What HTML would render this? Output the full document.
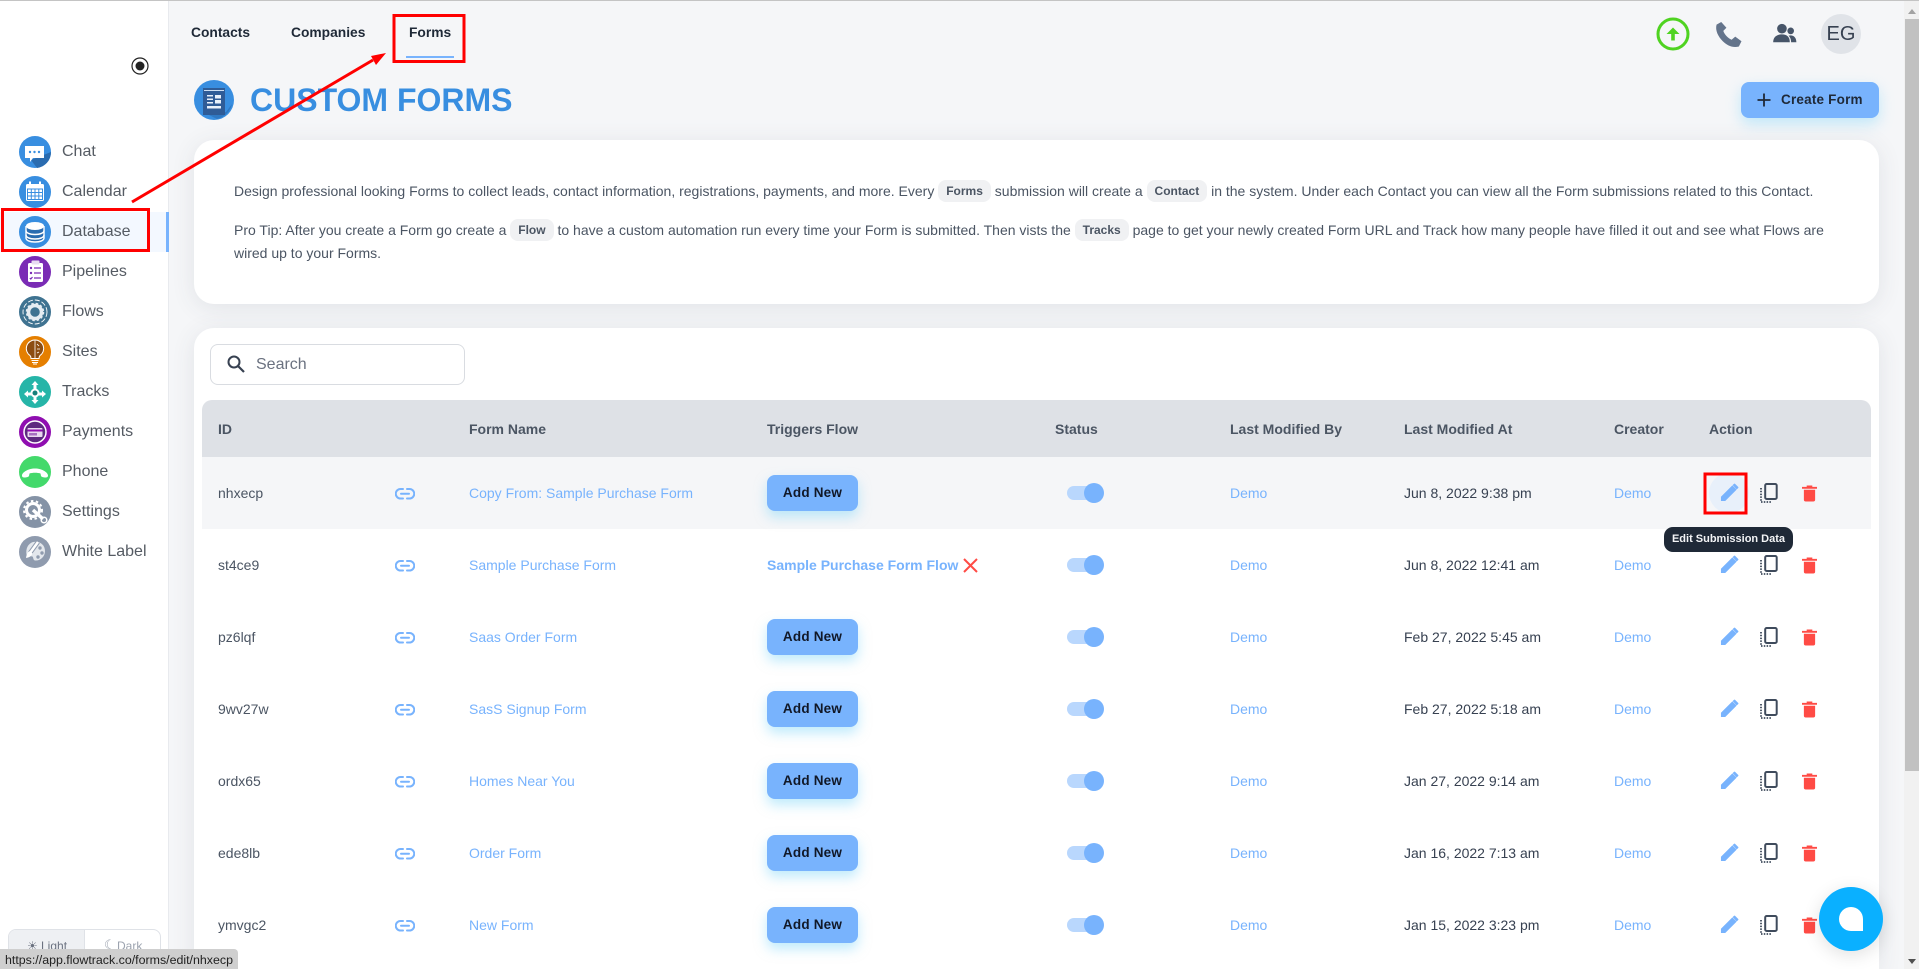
<!DOCTYPE html>
<html lang="en"><head><meta charset="utf-8"><title>Custom Forms</title>
<style>
html,body{margin:0;padding:0;width:1919px;height:969px;overflow:hidden;background:#f5f6f8;font-family:"Liberation Sans",sans-serif;color:#374151}
*{box-sizing:border-box}
#wrap{position:relative;width:1919px;height:969px;overflow:hidden;background:#f5f6f8}
.a{position:absolute}
#topline{left:0;top:0;width:1919px;height:1px;background:#c4c4c4;z-index:9}
#side{left:0;top:1px;width:169px;height:968px;background:#fff;border-right:1px solid #e8eaee}
.ni{position:absolute;left:19px;width:32px;height:32px}
.nl{position:absolute;left:62px;font-size:16px;line-height:20px;color:#555b63}
.tab{position:absolute;top:24px;font-size:13.8px;font-weight:bold;line-height:18px;color:#1f2937}
#title{left:250px;top:81px;font-size:32px;line-height:38px;font-weight:bold;color:#388ee0}
#create{left:1741px;top:82px;width:138px;height:36px;background:#78b3fd;border-radius:8px;box-shadow:0 6px 14px rgba(130,215,250,.45);font-size:13.5px;font-weight:bold;color:#1f2937;line-height:36px;padding-left:40px;letter-spacing:.2px}
.card{position:absolute;left:194px;width:1685px;background:#fff;border-radius:20px;box-shadow:0 4px 24px rgba(60,70,90,.1)}
.p{position:absolute;left:234px;font-size:14px;line-height:22px;color:#4b5563;white-space:nowrap}
.chip{display:inline-block;background:#f0f1f3;border-radius:8px;font-size:12px;font-weight:bold;line-height:23px;height:22px;padding:0 8px;margin:0;color:#4b5563;vertical-align:top}
#search{left:210px;top:344px;width:255px;height:41px;border:1px solid #d9dce1;border-radius:8px;background:#fff}
#shead{left:202px;top:400px;width:1669px;height:57px;background:#dee1e6;border-radius:10px 10px 0 0}
.th{position:absolute;top:420px;font-size:14px;font-weight:bold;line-height:18px;color:#4b5563}
.row{position:absolute;left:202px;width:1669px;height:72px}
.c{position:absolute;top:26px;font-size:14px;line-height:20px;white-space:nowrap}
.id{left:16px;color:#4b5563}.lk{color:#78b3fd}
.name{left:267px}.who{left:1028px}.when{left:1202px;color:#374151}.crt{left:1412px}
.btn{position:absolute;left:565px;top:18px;width:91px;height:36px;background:#78b3fd;border-radius:8px;box-shadow:0 6px 12px rgba(130,215,250,.5);font-size:13.5px;font-weight:bold;line-height:36px;text-align:center;color:#111827;letter-spacing:.2px}
.tr{position:absolute;left:865px;top:29px;width:33px;height:14px;border-radius:7px;background:#b9d7fd}
.kn{position:absolute;left:882px;top:26px;width:20px;height:20px;border-radius:50%;background:#78b3fd}
.i{position:absolute}
</style></head><body>
<div id="wrap">
<svg width="0" height="0" style="position:absolute">
<defs>
<symbol id="link" viewBox="0 0 20 12"><path d="M8 1H5.500a4.500 4.500 0 0 0 0 9.500H8M12 1h2.500a4.500 4.500 0 0 1 0 9.500H12M6 5.800h8" fill="none" stroke="#78b3fd" stroke-width="2" stroke-linecap="round"/></symbol>
<symbol id="pen" viewBox="0 0 20 20"><path d="M1 19v-4.500L13 2.500l4.500 4.500L5.500 19zM14.500 1l1-.5 4 4-.5 1-1.500 1.200L13.300 2.300z" fill="#78b3fd"/></symbol>
<symbol id="copy" viewBox="0 0 18 20"><rect x="5.200" y="1" width="11.500" height="15" rx="1.500" fill="none" stroke="#3f4b5c" stroke-width="2"/><path d="M1 5v14h10" fill="none" stroke="#3f4b5c" stroke-width="1.800" stroke-dasharray="1.500 1.300"/></symbol>
<symbol id="trash" viewBox="0 0 16 18"><path d="M0 2.500h16V4.500H0zM5 1h6v2H5zM2 5.500h12V16a2 2 0 0 1-2 2H4a2 2 0 0 1-2-2z" fill="#ff4b45"/></symbol>
</defs></svg>

<div class="a" id="topline"></div>

<div class="a" id="side"></div>
<svg class="a" style="left:131px;top:57px" width="20" height="20" viewBox="0 0 20 20"><circle cx="9" cy="9" r="8" fill="none" stroke="#222" stroke-width="1.200"/><circle cx="9" cy="9" r="4.500" fill="#222"/></svg>
<div class="a" style="left:0;top:212px;width:169px;height:40px;background:#f3f8ff"></div>
<div class="a" style="left:166px;top:212px;width:3px;height:40px;background:#78b3fd"></div>

<svg class="ni" style="top:136px" viewBox="0 0 32 32"><circle cx="16" cy="16" r="16" fill="#388ee0"/><path d="M12 24l20-8a16 16 0 0 1-14 16z" fill="#2a6cb0"/><path d="M6 10h19v12H14l-3 4v-4H6z" fill="#fff"/><circle cx="11" cy="16" r="1.200" fill="#388ee0"/><circle cx="15.500" cy="16" r="1.200" fill="#388ee0"/><circle cx="20" cy="16" r="1.200" fill="#388ee0"/></svg>
<div class="nl" style="top:142px">Chat</div>
<svg class="ni" style="top:176px" viewBox="0 0 32 32"><circle cx="16" cy="16" r="16" fill="#388ee0"/><rect x="7" y="8" width="18" height="17" rx="1.500" fill="#fff"/><rect x="10" y="5.500" width="2" height="5" fill="#fff"/><rect x="20" y="5.500" width="2" height="5" fill="#fff"/><path d="M8.500 13h15v10.500h-15zM12.300 13v10.500M16 13v10.500M19.800 13v10.500M8.500 16.500h15M8.500 20h15" fill="none" stroke="#388ee0" stroke-width="1"/></svg>
<div class="nl" style="top:182px">Calendar</div>
<svg class="ni" style="top:216px" viewBox="0 0 32 32"><circle cx="16" cy="16" r="16" fill="#388ee0"/><path d="M7 10v12c0 2.500 4 4 9 4s9-1.500 9-4V10" fill="#2a6cb0" stroke="#fff" stroke-width="1.400"/><ellipse cx="16" cy="10" rx="9" ry="4" fill="#fff"/><path d="M7 14.500c0 2.500 4 4 9 4s9-1.500 9-4M7 19c0 2.500 4 4 9 4s9-1.500 9-4" fill="none" stroke="#fff" stroke-width="1.400"/></svg>
<div class="nl" style="top:222px">Database</div>
<svg class="ni" style="top:256px" viewBox="0 0 32 32"><circle cx="16" cy="16" r="16" fill="#7a2bb5"/><rect x="9" y="7" width="15" height="19" rx="1.500" fill="#fff"/><rect x="12.500" y="4.500" width="8" height="4" rx="1" fill="#e8dcf2"/><circle cx="12" cy="12" r="1.200" fill="#7a2bb5"/><circle cx="12" cy="17" r="1.200" fill="#7a2bb5"/><path d="M10.800 22l1 1 1.700-2M15 12h7M15 17h7M15 22h7" fill="none" stroke="#7a2bb5" stroke-width="1.200"/></svg>
<div class="nl" style="top:262px">Pipelines</div>
<svg class="ni" style="top:296px" viewBox="0 0 32 32"><circle cx="16" cy="16" r="16" fill="#3f7391"/><circle cx="16" cy="16" r="12" fill="none" stroke="#fff" stroke-width=".9" stroke-dasharray="5 2"/><circle cx="16" cy="16" r="6.500" fill="none" stroke="#e6edf2" stroke-width="3.500"/><circle cx="16" cy="16" r="8.500" fill="none" stroke="#e6edf2" stroke-width="1.500" stroke-dasharray="2.500 2"/></svg>
<div class="nl" style="top:302px">Flows</div>
<svg class="ni" style="top:336px" viewBox="0 0 32 32"><circle cx="16" cy="16" r="16" fill="#e57f00"/><path d="M16 4a8.500 8.500 0 0 0-5 15.500c1 1 1 2 1 3h8c0-1 0-2 1-3A8.500 8.500 0 0 0 16 4z" fill="#8c4d12" stroke="#fff" stroke-width="1"/><path d="M16 4v18M18 8l2 2M18 13h3M18 17l2-1" stroke="#fff" stroke-width=".8" fill="none"/><path d="M12.500 24.500h7M13 26.500h6M14 28h4" stroke="#fff" stroke-width="1" fill="none"/></svg>
<div class="nl" style="top:342px">Sites</div>
<svg class="ni" style="top:376px" viewBox="0 0 32 32"><circle cx="16" cy="16" r="16" fill="#26b5a8"/><path d="M16 5l3.500 4h-2v4h-3V9h-2zM5 18l4-3.500v2h4v3H9v2zM27 18l-4-3.500v2h-4v3h4v2zM16 28l-3.500-4h2v-4h3v4h2z" fill="#fff"/><circle cx="16" cy="17" r="4.500" fill="#fff"/><circle cx="16" cy="17" r="2.500" fill="#16807a"/></svg>
<div class="nl" style="top:382px">Tracks</div>
<svg class="ni" style="top:416px" viewBox="0 0 32 32"><circle cx="16" cy="16" r="16" fill="#8f0eb0"/><circle cx="16" cy="16" r="11" fill="#5e2a80" stroke="#fff" stroke-width="1.500"/><rect x="8.500" y="12" width="15" height="9" rx="1" fill="#e9d8ef"/><rect x="8.500" y="13.500" width="15" height="2" fill="#8f0eb0"/><rect x="10" y="17" width="8" height="2.500" fill="#a66fc0"/></svg>
<div class="nl" style="top:422px">Payments</div>
<svg class="ni" style="top:456px" viewBox="0 0 32 32"><circle cx="16" cy="16" r="16" fill="#43d96b"/><path d="M3 19.500c0-3 6-7 13-7s13 4 13 7c0 1.500-1 2-2.500 2-2 0-4-.5-4.500-1.500l-.5-2.500c-3-1-8-1-11 0l-.5 2.500C9.500 21 7.500 21.500 5.500 21.500 4 21.500 3 21 3 19.500z" fill="#fff"/></svg>
<div class="nl" style="top:462px">Phone</div>
<svg class="ni" style="top:496px" viewBox="0 0 32 32"><circle cx="16" cy="16" r="16" fill="#8593a6"/><circle cx="14" cy="14" r="6.500" fill="none" stroke="#fff" stroke-width="3"/><circle cx="14" cy="14" r="9" fill="none" stroke="#fff" stroke-width="2" stroke-dasharray="2.500 2.500"/><path d="M14 14l10 9" stroke="#fff" stroke-width="3.500"/><circle cx="25" cy="24" r="2.800" fill="none" stroke="#fff" stroke-width="1.500"/></svg>
<div class="nl" style="top:502px">Settings</div>
<svg class="ni" style="top:536px" viewBox="0 0 32 32"><circle cx="16" cy="16" r="16" fill="#8f9bae"/><path d="M14 6c7-1.500 12 3 12 9 0 6-5 10-10 9.500-2-.3-1.500-3-2.500-4-2-1-5 1-6-2C6.500 13 9 7.500 14 6z" fill="#e3e7ec"/><circle cx="21" cy="12" r="1.700" fill="#8f9bae"/><circle cx="23" cy="17" r="1.700" fill="#8f9bae"/><circle cx="19" cy="21" r="1.700" fill="#8f9bae"/><path d="M19 6L11 17" stroke="#8f9bae" stroke-width="4.500"/><path d="M19 6L11 17" stroke="#fff" stroke-width="2.500"/><path d="M11 15c-2 1-3.500 3-4 7 3-.5 5-1.500 6.500-4.500z" fill="#fff"/></svg>
<div class="nl" style="top:542px">White Label</div>

<div class="a" style="left:8px;top:929px;width:153px;height:40px;border:1px solid #dfe2e7;border-radius:8px;background:#fff"></div>
<div class="a" style="left:9px;top:930px;width:76px;height:39px;background:#eef0f3;border-radius:7px 0 0 0;border-right:1px solid #dfe2e7"></div>
<div class="a" style="left:27px;top:938px;font-size:12px;color:#6b7280;line-height:16px">☀</div>
<div class="a" style="left:41px;top:938px;font-size:12px;color:#6b7280;line-height:16px">Light</div>
<div class="a" style="left:104px;top:937px;font-size:13px;color:#9ca3af;line-height:16px">☾</div>
<div class="a" style="left:117px;top:938px;font-size:12px;color:#9ca3af;line-height:16px">Dark</div>
<div class="a" style="left:0;top:949px;width:238px;height:20px;background:#cfcfcf;border-radius:0 4px 0 0;font-size:12.4px;line-height:23px;color:#222;padding-left:5px;z-index:8;white-space:nowrap;overflow:hidden">https://app.flowtrack.co/forms/edit/nhxecp</div>

<div class="tab" style="left:191px">Contacts</div>
<div class="tab" style="left:291px">Companies</div>
<div class="tab" style="left:409px">Forms</div>
<div class="a" style="left:406px;top:56px;width:48px;height:2px;background:#78b3fd"></div>

<svg class="a" style="left:1656px;top:17px" width="34" height="34" viewBox="0 0 34 34"><circle cx="17" cy="17" r="15" fill="none" stroke="#4fd321" stroke-width="3"/><path d="M17 10.500l6.500 6.500h-4.700v6.500h-3.600V17H10.500z" fill="#4fd321"/></svg>
<svg class="a" style="left:1715px;top:21px" width="27" height="27" viewBox="0 0 26 26"><path d="M6 1L1.500 3.500C0 9 3 15 7.500 19.500S17.500 26 23 24.500l2.500-5-6-4.500-3.500 3c-3-1-7-5-8-8.500l3-3z" fill="#64748b"/></svg>
<svg class="a" style="left:1773px;top:23px" width="24" height="21" viewBox="0 0 27 24"><circle cx="10" cy="6.500" r="5.500" fill="#475569"/><circle cx="20" cy="9" r="3.800" fill="#475569"/><path d="M0 22c0-6 4-9 10-9s9 3 9 9zM20.500 22c0-3-1-6-3-7.500 5-1.500 9 1.500 9 7.500z" fill="#475569"/></svg>
<div class="a" style="left:1821px;top:14px;width:40px;height:40px;border-radius:50%;background:#e0e3e8;font-size:20px;line-height:40px;text-align:center;color:#374151">EG</div>

<svg class="a" style="left:194px;top:80px" width="40" height="40" viewBox="0 0 40 40"><circle cx="20" cy="20" r="20" fill="#388ee0"/><path d="M15 35l17-3 6-8a20 20 0 0 1-15 15z" fill="#2f78c2"/><rect x="9" y="8" width="22" height="27" fill="#2f5c97"/><rect x="10" y="10" width="20" height="1" fill="#cfe0f3"/><path d="M13 15h6v1.500h-6zM13 18.500h6V20h-6zM13 22h6v1.500h-6zM21 15h6v3.500h-6zM21 20h6v3.500h-6zM13 26h14v2.500H13z" fill="#e8f1fb"/></svg>
<div class="a" id="title">CUSTOM FORMS</div>
<div class="a" id="create">Create Form</div>
<svg class="a" style="left:1756px;top:92px" width="16" height="16" viewBox="0 0 16 16"><path d="M8 1.500v13M1.500 8h13" stroke="#1f2937" stroke-width="1.800"/></svg>

<div class="card" style="top:140px;height:164px"></div>
<div class="p" style="top:180px">Design professional looking Forms to collect leads, contact information, registrations, payments, and more. Every <span class="chip">Forms</span> submission will create a <span class="chip">Contact</span> in the system. Under each Contact you can view all the Form submissions related to this Contact.</div>
<div class="p" style="top:219px">Pro Tip: After you create a Form go create a <span class="chip">Flow</span> to have a custom automation run every time your Form is submitted. Then vists the <span class="chip">Tracks</span> page to get your newly created Form URL and Track how many people have filled it out and see what Flows are</div>
<div class="p" style="top:242px">wired up to your Forms.</div>

<div class="card" style="top:328px;height:641px;border-radius:20px 20px 0 0"></div>
<div class="a" id="search"></div>
<svg class="a" style="left:226px;top:354px" width="20" height="20" viewBox="0 0 20 20"><circle cx="8" cy="8" r="5.500" fill="none" stroke="#374151" stroke-width="2"/><path d="M12 12l6 6" stroke="#374151" stroke-width="2.200"/></svg>
<div class="a" style="left:256px;top:355px;font-size:16px;line-height:20px;color:#6b7280">Search</div>

<div class="a" id="shead"></div>
<div class="th" style="left:218px">ID</div>
<div class="th" style="left:469px">Form Name</div>
<div class="th" style="left:767px">Triggers Flow</div>
<div class="th" style="left:1055px">Status</div>
<div class="th" style="left:1230px">Last Modified By</div>
<div class="th" style="left:1404px">Last Modified At</div>
<div class="th" style="left:1614px">Creator</div>
<div class="th" style="left:1709px">Action</div>

<div class="row" style="top:457px;background:#f5f6f8"><div class="c id">nhxecp</div><svg class="i" style="left:193px;top:31px" width="20" height="12"><use href="#link"/></svg><div class="c name lk">Copy From: Sample Purchase Form</div><div class="btn">Add New</div><div class="tr"></div><div class="kn"></div><div class="c who lk">Demo</div><div class="c when">Jun 8, 2022 9:38 pm</div><div class="c crt lk">Demo</div><div class="i" style="left:1507px;top:16px;width:40px;height:40px;border-radius:50%;background:#e8f0fa"></div><svg class="i" style="left:1518px;top:26px" width="19" height="19"><use href="#pen"/></svg><svg class="i" style="left:1558px;top:26px" width="18" height="20"><use href="#copy"/></svg><svg class="i" style="left:1600px;top:27px" width="15" height="18"><use href="#trash"/></svg></div>

<div class="row" style="top:529px"><div class="c id">st4ce9</div><svg class="i" style="left:193px;top:31px" width="20" height="12"><use href="#link"/></svg><div class="c name lk">Sample Purchase Form</div><div class="c lk" style="left:565px;font-weight:bold">Sample Purchase Form Flow</div><svg class="i" style="left:761px;top:29px" width="15" height="15" viewBox="0 0 15 15"><path d="M1 1l13 13M14 1L1 14" stroke="#ff4b45" stroke-width="2"/></svg><div class="tr"></div><div class="kn"></div><div class="c who lk">Demo</div><div class="c when">Jun 8, 2022 12:41 am</div><div class="c crt lk">Demo</div><svg class="i" style="left:1518px;top:26px" width="19" height="19"><use href="#pen"/></svg><svg class="i" style="left:1558px;top:26px" width="18" height="20"><use href="#copy"/></svg><svg class="i" style="left:1600px;top:27px" width="15" height="18"><use href="#trash"/></svg></div>

<div class="row" style="top:601px"><div class="c id">pz6lqf</div><svg class="i" style="left:193px;top:31px" width="20" height="12"><use href="#link"/></svg><div class="c name lk">Saas Order Form</div><div class="btn">Add New</div><div class="tr"></div><div class="kn"></div><div class="c who lk">Demo</div><div class="c when">Feb 27, 2022 5:45 am</div><div class="c crt lk">Demo</div><svg class="i" style="left:1518px;top:26px" width="19" height="19"><use href="#pen"/></svg><svg class="i" style="left:1558px;top:26px" width="18" height="20"><use href="#copy"/></svg><svg class="i" style="left:1600px;top:27px" width="15" height="18"><use href="#trash"/></svg></div>

<div class="row" style="top:673px"><div class="c id">9wv27w</div><svg class="i" style="left:193px;top:31px" width="20" height="12"><use href="#link"/></svg><div class="c name lk">SasS Signup Form</div><div class="btn">Add New</div><div class="tr"></div><div class="kn"></div><div class="c who lk">Demo</div><div class="c when">Feb 27, 2022 5:18 am</div><div class="c crt lk">Demo</div><svg class="i" style="left:1518px;top:26px" width="19" height="19"><use href="#pen"/></svg><svg class="i" style="left:1558px;top:26px" width="18" height="20"><use href="#copy"/></svg><svg class="i" style="left:1600px;top:27px" width="15" height="18"><use href="#trash"/></svg></div>

<div class="row" style="top:745px"><div class="c id">ordx65</div><svg class="i" style="left:193px;top:31px" width="20" height="12"><use href="#link"/></svg><div class="c name lk">Homes Near You</div><div class="btn">Add New</div><div class="tr"></div><div class="kn"></div><div class="c who lk">Demo</div><div class="c when">Jan 27, 2022 9:14 am</div><div class="c crt lk">Demo</div><svg class="i" style="left:1518px;top:26px" width="19" height="19"><use href="#pen"/></svg><svg class="i" style="left:1558px;top:26px" width="18" height="20"><use href="#copy"/></svg><svg class="i" style="left:1600px;top:27px" width="15" height="18"><use href="#trash"/></svg></div>

<div class="row" style="top:817px"><div class="c id">ede8lb</div><svg class="i" style="left:193px;top:31px" width="20" height="12"><use href="#link"/></svg><div class="c name lk">Order Form</div><div class="btn">Add New</div><div class="tr"></div><div class="kn"></div><div class="c who lk">Demo</div><div class="c when">Jan 16, 2022 7:13 am</div><div class="c crt lk">Demo</div><svg class="i" style="left:1518px;top:26px" width="19" height="19"><use href="#pen"/></svg><svg class="i" style="left:1558px;top:26px" width="18" height="20"><use href="#copy"/></svg><svg class="i" style="left:1600px;top:27px" width="15" height="18"><use href="#trash"/></svg></div>

<div class="row" style="top:889px"><div class="c id">ymvgc2</div><svg class="i" style="left:193px;top:31px" width="20" height="12"><use href="#link"/></svg><div class="c name lk">New Form</div><div class="btn">Add New</div><div class="tr"></div><div class="kn"></div><div class="c who lk">Demo</div><div class="c when">Jan 15, 2022 3:23 pm</div><div class="c crt lk">Demo</div><svg class="i" style="left:1518px;top:26px" width="19" height="19"><use href="#pen"/></svg><svg class="i" style="left:1558px;top:26px" width="18" height="20"><use href="#copy"/></svg><svg class="i" style="left:1600px;top:27px" width="15" height="18"><use href="#trash"/></svg></div>

<div class="a" style="left:1664px;top:527px;width:129px;height:25px;background:#1f2937;border-radius:9px;font-size:11px;font-weight:bold;line-height:25px;text-align:center;color:#f3f4f6;white-space:nowrap;z-index:5">Edit Submission Data</div>

<div class="a" style="left:1819px;top:887px;width:64px;height:64px;border-radius:50%;background:#0ab0ff;box-shadow:0 4px 18px rgba(0,0,0,.12);z-index:6"></div>
<div class="a" style="left:1839px;top:907px;width:24px;height:24px;background:#fff;border-radius:50% 50% 0 50%;z-index:7"></div>

<div class="a" style="left:1904px;top:1px;width:15px;height:968px;background:#f1f1f1;z-index:7"></div>
<div class="a" style="left:1905px;top:19px;width:14px;height:752px;background:#c1c1c1;z-index:7"></div>
<svg class="a" style="left:1906px;top:8px;z-index:8" width="12" height="7"><path d="M2 6l4-5 4 5z" fill="#a3a3a3"/></svg>
<svg class="a" style="left:1906px;top:958px;z-index:8" width="12" height="7"><path d="M2 1l4 5 4-5z" fill="#505050"/></svg>

<svg class="a" style="left:0;top:0;z-index:10;pointer-events:none" width="1919" height="969">
<g fill="none" stroke="#f00" stroke-width="3">
<rect x="2.500" y="209.500" width="146" height="41"/>
<rect x="394" y="15.500" width="70" height="46"/>
<rect x="1705" y="474" width="41" height="39"/>
</g>
<path d="M132 202L373 60" stroke="#f00" stroke-width="3" fill="none"/>
<path d="M386 53L371 56l5 9z" fill="#f00"/>
</svg>
</div>
</body></html>
